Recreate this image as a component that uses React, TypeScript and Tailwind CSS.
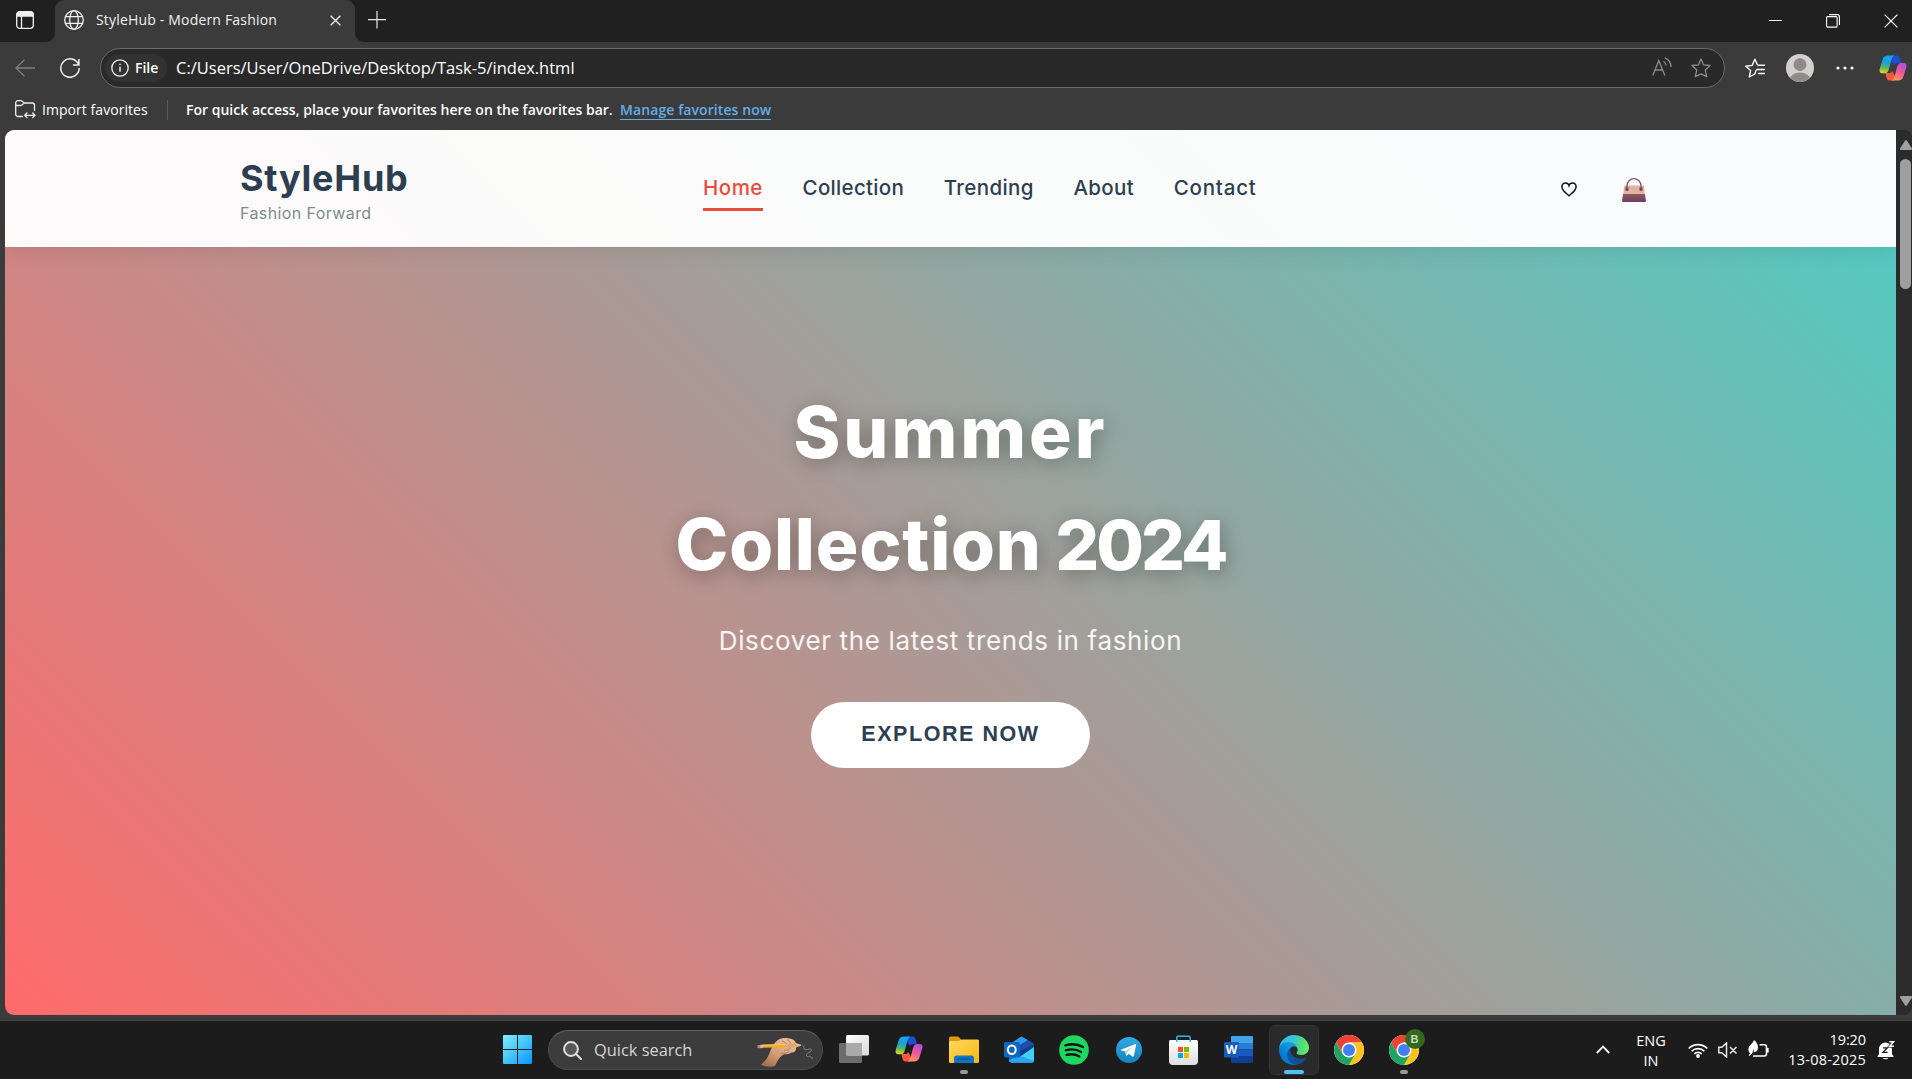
import React from "react";

const NAV = [
  { label: "Home", cls: "tracking-[0.5px] text-[#e74c3c] border-[#e74c3c]" },
  { label: "Collection", cls: "tracking-[0.3px] text-[#2c3e50] border-transparent" },
  { label: "Trending", cls: "tracking-[0.37px] text-[#2c3e50] border-transparent" },
  { label: "About", cls: "tracking-[0.35px] text-[#2c3e50] border-transparent" },
  { label: "Contact", cls: "tracking-[0.78px] text-[#2c3e50] border-transparent" },
];

function Copilot({ id, className }: { id: string; className: string }) {
  return (
    <svg viewBox="0 0 28 26" className={className} fill="none">
      <defs>
        <linearGradient id={id + "a"} x1="10" y1="1" x2="6" y2="19" gradientUnits="userSpaceOnUse">
          <stop stopColor="#12a5f4" /><stop offset=".4" stopColor="#1f9fd8" /><stop offset=".65" stopColor="#4cb96a" /><stop offset="1" stopColor="#f6d31f" />
        </linearGradient>
        <linearGradient id={id + "b"} x1="24" y1="7" x2="15" y2="26" gradientUnits="userSpaceOnUse">
          <stop stopColor="#a44ff0" /><stop offset=".5" stopColor="#f0559a" /><stop offset="1" stopColor="#ffa554" />
        </linearGradient>
      </defs>
      <path d="M13 .5h4.500c1.500 0 2.500.8 3 2.400l1.500 5.200h-4.200c-1.400 0-2.300.8-2.800 2.200L11 2.500z" fill="#1c4fd6" />
      <path d="M15 25.500h-4.600c-1.500 0-2.400-.9-2.800-2.400L6.300 18h4c1.500 0 2.500-.8 2.900-2.300l3.800 7.500z" fill="#f45a3c" />
      <path d="M9.200.5h6.500c-1.700.3-2.500 1.800-3.100 3.800L9.900 14.300c-.7 2.500-1.900 3.900-4.200 3.900H3.400c-2.400 0-3.400-1.600-2.700-4.200L3.500 4.700C4.400 1.800 6.200.5 9.200.5z" fill={`url(#${id}a)`} />
      <path d="M18.800 25.500h-6.500c1.700-.3 2.500-1.800 3.100-3.800l2.700-9.800c.7-2.500 1.900-3.900 4.200-3.900h2.300c2.400 0 3.400 1.600 2.700 4.200l-2.800 9.100c-.9 2.900-2.700 4.200-5.700 4.200z" fill={`url(#${id}b)`} />
    </svg>
  );
}

function Chrome({ className }: { className: string }) {
  return (
    <svg viewBox="0 0 48 48" className={className}>
      <circle cx="24" cy="24" r="24" fill="#fff" />
      <path d="M24 12h20.800A24 24 0 0 0 3.220 12L13.600 30 24 24z" fill="#ea4335" />
      <path d="M34.400 30 24 48A24 24 0 0 0 44.780 12H24v12z" fill="#fcc31e" />
      <path d="M13.600 30 3.220 12A24 24 0 0 0 24 48l10.400-18L24 26z" fill="#1ea362" />
      <circle cx="24" cy="24" r="12" fill="#fff" />
      <circle cx="24" cy="24" r="9.600" fill="#4080f0" />
    </svg>
  );
}

function TabStrip() {
  return (
    <div className="flex h-[42px] bg-[#202020] text-[#f0f0f0]">
      <div className="bg-[#3b3b3b]">
        <div className="flex h-[42px] w-[55px] items-start rounded-br-[9px] bg-[#202020] pt-[11px] pl-4">
          <svg viewBox="0 0 18 18" className="size-[18px]" fill="none" stroke="#f0f0f0" strokeWidth="1.300">
            <rect x=".7" y=".7" width="16.600" height="16.600" rx="3" />
            <path d="M1 3.500A2.500 2.500 0 0 1 3.500 1h11A2.500 2.500 0 0 1 17 3.500V5H1z" fill="#f0f0f0" />
            <path d="M5.500 5v12" />
          </svg>
        </div>
      </div>
      <div className="flex h-[42px] w-[300px] items-start rounded-t-[9px] bg-[#3b3b3b] pl-[9px]">
        <svg viewBox="0 0 20 20" className="mt-[10px] size-5" fill="none" stroke="#f0f0f0" strokeWidth="1.300">
          <circle cx="10" cy="10" r="9.300" />
          <ellipse cx="10" cy="10" rx="4.300" ry="9.300" />
          <path d="M1.500 6.700h17M1.500 13.300h17" />
        </svg>
        <span className="ml-3 w-[234px] text-[14px] leading-[40px] tracking-[0.18px] whitespace-nowrap">StyleHub - Modern Fashion</span>
        <svg viewBox="0 0 12 12" className="mt-[15px] size-[11px]" stroke="#f0f0f0" strokeWidth="1.500">
          <path d="M.7.7l10.600 10.600M11.300.7.7 11.300" />
        </svg>
      </div>
      <div className="flex-1 bg-[#3b3b3b]">
        <div className="flex h-[42px] items-start rounded-bl-[9px] bg-[#202020] pl-[13px]">
          <svg viewBox="0 0 18 18" className="mt-[11px] size-[18px]" stroke="#e8e8e8" strokeWidth="1.200">
            <path d="M9 0v17.500M0 8.600h18" />
          </svg>
          <div className="ml-auto flex items-start gap-[44px] pt-[14px] pr-[14px]">
            <span className="mt-[6px] h-px w-[13px] bg-white" />
            <svg viewBox="0 0 14 14" className="size-[14px]" fill="none" stroke="#fff" strokeWidth="1.100">
              <rect x=".6" y="2.600" width="10.500" height="10.500" rx="1" />
              <path d="M3 .6h8.400a2 2 0 0 1 2 2V11" />
            </svg>
            <svg viewBox="0 0 14 14" className="size-[14px]" stroke="#fff" strokeWidth="1.200">
              <path d="M.6.6l12.800 12.800M13.400.6.6 13.400" />
            </svg>
          </div>
        </div>
      </div>
    </div>
  );
}

function Toolbar() {
  return (
    <div className="flex h-[52px] items-center text-white">
      <svg viewBox="0 0 20 18" className="ml-[15px] h-[18px] w-5" fill="none" stroke="#808080" strokeWidth="1.300">
        <path d="M9.500.7.9 9l8.600 8.300M.9 9H20" />
      </svg>
      <svg viewBox="0 0 20 20" className="ml-[25px] size-5" fill="none" stroke="#f0f0f0" strokeWidth="1.500">
        <path d="M18.600 6.800A9.200 9.200 0 1 0 19.200 10M18.900 1v5.900h-5.900" />
      </svg>
      <div className="ml-5 flex h-10 w-[1625px] items-center rounded-full border border-[#6a6a6a] bg-[#292929] pl-1">
        <div className="flex h-7 w-[62px] items-center rounded-full bg-[#323232] pl-[6px]">
          <svg viewBox="0 0 18 18" className="size-[18px]" fill="none" stroke="#f0f0f0" strokeWidth="1.300">
            <circle cx="9" cy="9" r="8.200" />
            <path d="M9 7.700v5" strokeWidth="1.500" />
            <circle cx="9" cy="5.300" r=".5" fill="#f0f0f0" strokeWidth=".7" />
          </svg>
          <span className="ml-[6px] text-[14px] leading-7 font-semibold">File</span>
        </div>
        <span className="ml-[9px] text-[16.5px] leading-10 whitespace-nowrap">C:/Users/User/OneDrive/Desktop/Task-5/index.html</span>
        <svg viewBox="0 0 20 20" className="mb-[2px] ml-auto size-5" fill="none" stroke="#8c8c8c" strokeWidth="1.300">
          <path d="M.8 18.500 6.800 3.500l6 15M3 13h7.700M11.500 4.300c1.500.8 2.400 2.300 2.500 4.200M12.800.8c3.600 1.300 6 4.500 6.200 9.200" />
        </svg>
        <svg viewBox="0 0 20 20" className="mr-[13px] ml-[19px] size-5" fill="none" stroke="#8c8c8c" strokeWidth="1.300" strokeLinejoin="round">
          <path d="M10 .9l2.600 6 6.500.6-4.900 4.400 1.500 6.800L10 15.800 4.300 18.700l1.500-6.800L.9 7.500l6.500-.6z" />
        </svg>
      </div>
      <svg viewBox="0 0 20 20" className="ml-5 size-5" fill="none" stroke="#fff" strokeWidth="1.400" strokeLinejoin="round" strokeLinecap="round">
        <path d="M11 12.500 9.800 16 4.300 19l1.300-6.500L.8 8.300l6.300-.9L9.900 1.200l2.500 5.600M13.500 7.300H20M12 11.500h8M13.500 15.500H20" />
      </svg>
      <svg viewBox="0 0 28 28" className="ml-[21px] size-7">
        <defs><clipPath id="av"><circle cx="14" cy="14" r="14" /></clipPath></defs>
        <circle cx="14" cy="14" r="14" fill="#d2d0ce" />
        <g fill="#8f8b88" clipPath="url(#av)"><circle cx="14" cy="10.500" r="6.400" /><ellipse cx="14" cy="26.500" rx="10.500" ry="8" /></g>
      </svg>
      <svg viewBox="0 0 18 4" className="ml-[22px] h-1 w-[18px]" fill="#fff">
        <circle cx="2" cy="2" r="1.600" /><circle cx="9" cy="2" r="1.600" /><circle cx="16" cy="2" r="1.600" />
      </svg>
      <Copilot id="ct" className="ml-[25px] h-[26px] w-7" />
    </div>
  );
}

function FavoritesBar() {
  return (
    <div className="flex h-9 items-start whitespace-nowrap text-white">
      <svg viewBox="0 0 21 19" className="mt-[6px] ml-[15px] h-[19px] w-[21px]" fill="none" stroke="#f0f0f0" strokeWidth="1.300" strokeLinejoin="round" strokeLinecap="round">
        <path d="M7.500 16.500H3A2.300 2.300 0 0 1 .7 14.200V3A2.300 2.300 0 0 1 3 .7h3.500L9.200 3h8A2.300 2.300 0 0 1 19.500 5.300V10.500M.8 5.500h5.500L9.200 3M10 15.300h9.500M12 13l-2.300 2.300L12 17.600M17.700 13l2.300 2.300-2.300 2.300" />
      </svg>
      <span className="ml-[6px] w-[125px] text-[14px] leading-[31px] tracking-[0.05px]">Import favorites</span>
      <span className="mt-[6px] h-5 w-px bg-[#5a5a5a]" />
      <span className="ml-[18px] w-[434px] text-[14px] leading-[31px] font-semibold tracking-[0.01px]">For quick access, place your favorites here on the favorites bar.</span>
      <span className="mt-[6px] border-b border-[#62aeea] text-[14px] leading-[19px] font-semibold tracking-[0.09px] text-[#62aeea]">
        <span className="inline-block h-[17px]">Manage favorites now</span>
      </span>
    </div>
  );
}

function SiteHeader() {
  return (
    <header className="relative z-10 flex h-[117px] w-full shrink-0 items-start bg-[rgba(254,254,254,0.965)] pl-[235px] shadow-[0_2px_20px_rgba(0,0,0,0.1)]">
      <div className="w-[463px] pt-[26px]">
        <div className="text-[36px] leading-[44px] font-bold tracking-[0.75px] text-[#2c3e50]">StyleHub</div>
        <div className="text-[16px] leading-[27px] tracking-[0.4px] text-[#7f8c8d]">Fashion Forward</div>
      </div>
      <nav className="flex gap-[39.7px] pt-[42px]">
        {NAV.map((n) => (
          <a key={n.label} className={"border-b-3 pb-1 text-[20.5px] leading-8 font-medium " + n.cls}>{n.label}</a>
        ))}
      </nav>
      <svg viewBox="0 0 16 15" className="mt-[52px] mr-[45px] ml-auto h-[15px] w-4" fill="none" stroke="#111" strokeWidth="1.500">
        <path d="M8 13.700C5.500 11.500.9 8.600.9 4.700A3.600 3.600 0 0 1 4.500 1C6.300 1 7.600 2.200 8 3.500 8.400 2.200 9.700 1 11.500 1a3.600 3.600 0 0 1 3.600 3.700c0 3.900-4.600 6.800-7.100 9z" />
      </svg>
      <svg viewBox="0 0 24 24" className="mt-12 mr-[250px] size-6" fill="none">
        <defs>
          <linearGradient id="bagA" x1="0" y1="0" x2="0" y2="1"><stop stopColor="#deb09c" /><stop offset="1" stopColor="#e4b3a5" /></linearGradient>
          <linearGradient id="bagB" x1="0" y1="0" x2="0" y2="1"><stop stopColor="#8e5b62" /><stop offset="1" stopColor="#6d3b5e" /></linearGradient>
        </defs>
        <path d="M3 7.500h18a1 1 0 0 1 1 1l.7 8H1.300l.7-8a1 1 0 0 1 1-1z" fill="url(#bagA)" />
        <path d="M1 16h22l.9 6.500a1.300 1.300 0 0 1-1.300 1.500H1.400A1.300 1.300 0 0 1 .1 22.500z" fill="url(#bagB)" />
        <path d="M5 11V7.700a7 7 0 0 1 14 0V11" stroke="#8a5561" strokeWidth="1.300" />
        <path d="M3.500 9.500h3v3.300h-3zM17.500 9.500h3v3.300h-3z" fill="#7a4250" />
      </svg>
    </header>
  );
}

function Scrollbar() {
  return (
    <div className="flex w-4 flex-col items-center rounded-r-[8px] bg-[#2b2b2b] pt-[10px] pb-[9px]">
      <svg viewBox="0 0 12 10" className="ml-[3px] h-[10px] w-3" fill="#9f9f9f"><path d="M5 .8a1.200 1.200 0 0 1 2 0l4.800 7.400A1.200 1.200 0 0 1 11 10H1A1.200 1.200 0 0 1 .2 8.200z" /></svg>
      <div className="mt-[9px] ml-[3px] h-[130px] w-[11px] rounded-full bg-[#9f9f9f]" />
      <svg viewBox="0 0 12 10" className="mt-auto ml-[3px] h-[10px] w-3 rotate-180" fill="#9f9f9f"><path d="M5 .8a1.200 1.200 0 0 1 2 0l4.800 7.400A1.200 1.200 0 0 1 11 10H1A1.200 1.200 0 0 1 .2 8.200z" /></svg>
    </div>
  );
}

function Page() {
  return (
    <div className="flex h-[885px] pl-[5px]">
      <div className="flex w-[1891px] flex-col items-center overflow-hidden rounded-l-[9px] bg-[linear-gradient(45deg,#ff6b6b,#4ecdc4)] font-['Inter',sans-serif]">
        <SiteHeader />
        <h1 className="mt-[129px] text-center text-[71px] leading-[112px] font-extrabold whitespace-nowrap text-white [text-shadow:2px_4px_20px_rgba(0,0,0,0.3)]">
          <span className="tracking-[3px]">Summer</span><br />
          <span className="tracking-[0.8px]">Collection</span><span className="tracking-[-2px]"> </span><span className="text-[69px] tracking-[-3px]">2024</span>
        </h1>
        <p className="mt-[20px] text-[26px] leading-10 tracking-[0.64px] whitespace-nowrap text-white/90">Discover the latest trends in fashion</p>
        <button className="mt-[41px] h-[66px] w-[279px] shrink-0 rounded-full bg-white pb-[2px] font-['Liberation_Sans',Arial,sans-serif] text-[21.5px] font-bold tracking-[1.55px] text-[#2c3e50]">EXPLORE NOW</button>
      </div>
      <Scrollbar />
    </div>
  );
}

function Slot({ children, active, dot, bar }: { children: React.ReactNode; active?: boolean; dot?: boolean; bar?: boolean }) {
  return (
    <div className="flex w-[55px] justify-center pt-1">
      <div className={"relative flex h-[50px] w-[50px] items-center justify-center pb-[1px] " + (active ? "rounded-[6px] border border-[#343434] bg-[#2a2a2a]" : "")}>
        {children}
        {dot && <span className="absolute bottom-[1px] left-[21px] h-1 w-2 rounded-full bg-[#9a9a9a]" />}
        {bar && <span className="absolute bottom-0 left-[14px] h-1 w-5 rounded-full bg-[#4cc2ff]" />}
      </div>
    </div>
  );
}

function Taskbar() {
  return (
    <div className="flex h-[58px] bg-[#1c1c1c] pl-[490px] text-white">
      <Slot>
        <svg viewBox="0 0 29 29" className="size-[29px]">
          <defs><linearGradient id="win" x1="0" y1="0" x2="29" y2="29" gradientUnits="userSpaceOnUse"><stop stopColor="#80eeff" /><stop offset=".5" stopColor="#45c5fb" /><stop offset="1" stopColor="#0a94ff" /></linearGradient></defs>
          <path d="M1 0h13v14H0V1a1 1 0 0 1 1-1zM15 0h13a1 1 0 0 1 1 1v13H15zM0 15h14v14H1a1 1 0 0 1-1-1zM15 15h14v13a1 1 0 0 1-1 1H15z" fill="url(#win)" />
        </svg>
      </Slot>
      <div className="mt-[9px] mr-[3px] ml-[3px] flex h-10 w-[275px] items-center rounded-full border border-[#4c4c4c] border-t-[#606060] bg-[#3c3c3c] pl-[14px]">
        <svg viewBox="0 0 19 19" className="size-[19px]" fill="none" stroke="#e0e0e0" strokeWidth="2"><circle cx="8" cy="8" r="6.900" fill="#585858" /><path d="m13 13 5 5" strokeLinecap="round" /></svg>
        <span className="ml-3 pb-px text-[16.4px] leading-9 whitespace-nowrap text-[#d4d4d4]">Quick search</span>
        <svg viewBox="0 0 57 30" className="mt-[3px] mr-[8px] ml-auto h-[30px] w-[57px]" fill="none">
          <defs><linearGradient id="hand" x1="28" y1="2" x2="12" y2="29" gradientUnits="userSpaceOnUse"><stop stopColor="#e9bd98" /><stop offset=".6" stopColor="#cf9a73" /><stop offset="1" stopColor="#a9714d" /></linearGradient></defs>
          <path d="M4 27.500c4.500-3.500 7.500-8 9.500-14 1.600-4.500 4-8 7.500-10.500 3-2 8-2.500 11-1.500 4 .3 6 2 7 5 2 1.500 1.500 3.500 0 4.500.3 3-2 5-4.500 4.500-2 1.500-4.500 2-7.500 1.800-3.500 2-6.500 5.700-9 11.700-5 1.500-11 .5-14-1.500z" fill="url(#hand)" />
          <path d="M30 2.500c2.500 1.500 4 3 4.500 5.500M25 4c3 1 4.500 2.500 5 4M27 13c2 .5 5 0 7-2.500M24 16c3 1 6 .5 8-1.500" stroke="#a96c4a" strokeWidth=".8" />
          <path d="M5 7.800 40 6.500v3.500L5 10.800z" fill="#f5a623" /><path d="M5 7.800 40 6.500v1.200L5 8.900z" fill="#ffc95a" />
          <path d="M40 6.500 46 8.300 40 10z" fill="#e6c08f" />
          <path d="M44 7.700 46 8.300 44 9z" fill="#333" />
          <path d="M.5 8h3v3.200h-3z" fill="#e0727f" /><path d="M3.200 7.800h2.500v3.300H3.200z" fill="#b9c3d0" />
          <path d="M27 8.500c2-1.500 4-2 6-1.500l4.500-1c2 .5 2 2.500 0 3.500l-4.500 1c-2 1-4.500.5-6-2z" fill="#dba77f" />
          <path d="M47 8.500c-1 3.500 1 5 3.500 4s5-.5 3.500 1.500-5 2-4.500 4.500 3.500 0 4 1 .5 2 2.500 1.500" stroke="#8b8b8b" strokeWidth=".9" />
        </svg>
      </div>
      <Slot>
        <svg viewBox="0 0 30 28" className="mb-px h-7 w-[30px]">
          <defs><linearGradient id="tv" x1="0" y1="0" x2="1" y2="1"><stop stopColor="#fff" /><stop offset="1" stopColor="#d8d8d8" /></linearGradient></defs>
          <rect x="0" y="8" width="23" height="20" rx="1.500" fill="#6c6c6c" /><rect x="7" y="0" width="23" height="20.500" rx="1.500" fill="url(#tv)" /><path d="M7 8h16v12.500H8.500A1.500 1.500 0 0 1 7 19z" fill="#a9a9a9" />
        </svg>
      </Slot>
      <Slot><Copilot id="cb" className="mb-[2px] h-[26px] w-7" /></Slot>
      <Slot dot>
        <svg viewBox="0 0 30 27" className="h-[27px] w-[30px]">
          <defs><linearGradient id="fo" x1="0" y1="0" x2="1" y2="1"><stop stopColor="#ffd862" /><stop offset="1" stopColor="#fbb90e" /></linearGradient></defs>
          <path d="M0 2a1.500 1.500 0 0 1 1.500-1.500H8c1 0 1.500.3 2.200 1L12.500 4H28v6H0z" fill="#dd9a08" />
          <path d="M0 6.500a1.500 1.500 0 0 1 1.500-1.500H9c1 0 1.600-.3 2.300-.8.700-.6 1.200-.8 2.200-.8h15A1.500 1.500 0 0 1 30 5v20.500a1.500 1.500 0 0 1-1.500 1.500h-27A1.500 1.500 0 0 1 0 25.500z" fill="url(#fo)" />
          <path d="M5 27v-5a2.500 2.500 0 0 1 2.500-2.500h15A2.500 2.500 0 0 1 25 22v5z" fill="#0f75c9" /><path d="M8.500 23h13" stroke="#0a4a90" strokeWidth="1.200" />
        </svg>
      </Slot>
      <Slot>
        <svg viewBox="0 0 30 27" className="h-[27px] w-[30px]">
          <path d="M6 8 17.500.5 30 8v16a2.500 2.500 0 0 1-2.500 2.500h-20A2.500 2.500 0 0 1 5 24z" fill="#1572c8" />
          <path d="M6 8 17.500.5l6 3.600L10 13z" fill="#2f9be8" /><path d="M24 4 30 8 16 17l-6-4z" fill="#1d4fa8" />
          <path d="M30 8v6L14 24l-4-6z" fill="#0c3f94" />
          <path d="M30 11v13a2.500 2.500 0 0 1-2.500 2.500h-20L5 24l12-4z" fill="#3fd0f5" /><path d="m17 20 13 5a2.500 2.500 0 0 1-2.500 1.500h-20A2.500 2.500 0 0 1 5 24z" fill="#2aa5ee" />
          <rect y="6" width="16" height="15.500" rx="1.500" fill="#0f66bf" />
          <ellipse cx="7.800" cy="13.700" rx="3.900" ry="4.300" fill="none" stroke="#fff" strokeWidth="2" />
        </svg>
      </Slot>
      <Slot>
        <svg viewBox="0 0 30 30" className="size-[30px]" fill="none" strokeLinecap="round"><circle cx="15" cy="15" r="14.800" fill="#1ed760" /><path d="M6.300 10.400c6-1.800 12.800-1.200 17.800 1.700M6.800 15.300c5.300-1.500 10.800-.9 15.300 1.700M7.500 19.900c4.500-1.200 9-.7 12.900 1.500" stroke="#131313" strokeWidth="2.300" /></svg>
      </Slot>
      <Slot>
        <svg viewBox="0 0 26 26" className="size-[26px]"><defs><linearGradient id="tg" x1="0" y1="0" x2="0" y2="1"><stop stopColor="#2fabe6" /><stop offset="1" stopColor="#1583c0" /></linearGradient></defs><circle cx="13" cy="13" r="13" fill="url(#tg)" /><path d="M4.800 12.800 18.900 7.200c.7-.3 1.300.2 1.100 1.100l-2.200 10.600c-.2.800-.8 1-1.400.6l-3.600-2.700-1.800 1.700c-.5.400-.9.200-.9-.3l-1-3.700-4.200-1.300c-.5-.1-.5-.3-.1-.4z" fill="#fff" /><path d="m9.300 14.500 7.800-5-6.200 6-.3 2.600z" fill="#a9cfe6" /></svg>
      </Slot>
      <Slot>
        <svg viewBox="0 0 29 30" className="h-[30px] w-[29px]"><defs><linearGradient id="st" x1="0" y1="0" x2="0" y2="1"><stop stopColor="#fff" /><stop offset="1" stopColor="#dedede" /></linearGradient></defs><path d="M0 6.500A1.500 1.500 0 0 1 1.500 5h26A1.500 1.500 0 0 1 29 6.500V26a4 4 0 0 1-4 4H4a4 4 0 0 1-4-4z" fill="url(#st)" /><path d="M7.800 7V2.500A1.300 1.300 0 0 1 9 1.200h11a1.300 1.300 0 0 1 1.200 1.300V7" fill="none" stroke="#2bb3ee" strokeWidth="1.500" /><path d="M9 12h5v5H9z" fill="#f25022" /><path d="M15 12h5v5h-5z" fill="#7fba00" /><path d="M9 18h5v5H9z" fill="#00a4ef" /><path d="M15 18h5v5h-5z" fill="#ffb900" /></svg>
      </Slot>
      <Slot>
        <div className="relative mb-px h-[27px] w-[29px]">
          <svg viewBox="0 0 29 27" className="h-[27px] w-[29px]"><path d="M8 0h20a1 1 0 0 1 1 1v6H7V1a1 1 0 0 1 1-1z" fill="#41a5ee" /><path d="M7 7h22v6.500H7z" fill="#2b7cd3" /><path d="M7 13.500h22V20H7z" fill="#185abd" /><path d="M7 20h22v6a1 1 0 0 1-1 1H8a1 1 0 0 1-1-1z" fill="#103f91" /><rect y="6" width="15" height="15.500" rx="1.300" fill="#185abd" /></svg>
          <span className="absolute top-[6px] left-0 w-[15px] text-center font-['Open_Sans',sans-serif] text-[12px] leading-[15px] font-bold">W</span>
        </div>
      </Slot>
      <Slot active bar>
        <svg viewBox="0 0 256 256" className="size-[30px]">
          <defs>
            <linearGradient id="e1" x1="63" y1="177" x2="241" y2="177" gradientUnits="userSpaceOnUse"><stop stopColor="#0c59a4" /><stop offset="1" stopColor="#114a8b" /></linearGradient>
            <linearGradient id="e2" x1="157" y1="100" x2="46" y2="222" gradientUnits="userSpaceOnUse"><stop stopColor="#1b9de2" /><stop offset=".3" stopColor="#1595df" /><stop offset=".7" stopColor="#0680d7" /><stop offset="1" stopColor="#0078d4" /></linearGradient>
            <linearGradient id="e3" x1="10" y1="60" x2="245" y2="110" gradientUnits="userSpaceOnUse"><stop stopColor="#35b8ef" /><stop offset=".45" stopColor="#37c6d0" /><stop offset=".8" stopColor="#55dc70" /><stop offset="1" stopColor="#66eb6e" /></linearGradient>
          </defs>
          <path d="M231 190.500a94 94 0 0 1-10.500 4.700 102 102 0 0 1-35.900 6.500c-47.300 0-88.500-32.600-88.500-74.300a31.500 31.500 0 0 1 16.400-27.300c-42.800 1.800-53.800 46.400-53.800 72.500 0 73.900 68.100 81.400 82.800 81.400 7.900 0 19.800-2.300 27-4.600l1.300-.4a128.300 128.300 0 0 0 66.600-52.800 4 4 0 0 0-5.400-5.700z" fill="url(#e1)" />
          <path d="M105.700 241.400a79 79 0 0 1-22.700-21.300 80.700 80.700 0 0 1 29.500-120c3.200-1.500 8.500-4.100 15.600-4a32.400 32.400 0 0 1 25.700 13 31.900 31.900 0 0 1 6.300 18.700c0-.2 24.500-79.600-80-79.600-43.900 0-80 41.700-80 78.200a130.200 130.200 0 0 0 12.100 56 128 128 0 0 0 156.400 67 75.500 75.500 0 0 1-62.800-8z" fill="url(#e2)" />
          <path d="M152.300 148.900c-.8 1-3.300 2.500-3.300 5.700 0 2.600 1.700 5.100 4.700 7.200 14.400 10 41.500 8.700 41.500 8.700a59.600 59.600 0 0 0 30.300-8.300 61.400 61.400 0 0 0 30.500-52.900c.3-22.400-8-37.300-11.300-43.900C223.500 23.900 177.700 0 128 0A128 128 0 0 0 0 126.200c.5-36.500 36.800-66 80-66 3.500 0 23.500.3 42 10.100 16.300 8.600 24.900 19 30.800 29.200 6.200 10.700 7.300 24.200 7.300 29.500 0 5.400-2.700 13.400-7.800 19.900z" fill="url(#e3)" />
        </svg>
      </Slot>
      <Slot><Chrome className="size-[30px]" /></Slot>
      <Slot dot>
        <Chrome className="size-[30px]" />
        <span className="absolute top-[4px] left-[26px] size-5 rounded-full bg-[#33691e] text-center font-['Liberation_Sans',sans-serif] text-[11px] leading-5 font-bold text-[#c9dcc0]">B</span>
      </Slot>
      <div className="mr-[17px] ml-auto flex items-start text-[14.5px]">
        <svg viewBox="0 0 14 9" className="mt-6 h-[9px] w-[14px]" fill="none" stroke="#f4f4f4" strokeWidth="1.800"><path d="m.8 8 6.200-6.400L13.200 8" /></svg>
        <div className="mt-[9.5px] ml-6 w-[34px] text-center leading-5">ENG<br />IN</div>
        <svg viewBox="0 0 20 16" className="mt-[21px] ml-5 h-4 w-5" fill="none" stroke="#fff" strokeWidth="1.600"><path d="M.7 6.500a13.200 13.200 0 0 1 18.600 0M3.600 9.300a9 9 0 0 1 12.800 0M6.300 11.900a5.200 5.200 0 0 1 7.400 0" /><circle cx="10" cy="14" r="1.900" fill="#fff" stroke="none" /></svg>
        <svg viewBox="0 0 20 16" className="mt-[21px] ml-[10px] h-4 w-5" fill="none" stroke="#e8e8e8" strokeWidth="1.500"><path d="M.8 5.200h3L8.500 1v14l-4.700-4.200h-3zM12 5l6.500 6.500M18.500 5 12 11.500" /></svg>
        <svg viewBox="0 0 21 18" className="mt-[19px] ml-[10px] h-[18px] w-[21px]" fill="none">
          <path d="M11.500 4.700h4.800a2.200 2.200 0 0 1 2.200 2.200v6.900a2.200 2.200 0 0 1-2.200 2.200H5" stroke="#fff" strokeWidth="1.600" />
          <path d="M19 8h1.700v4.500H19z" fill="#fff" />
          <path d="M6 0c2.500 2 4 4.500 4 7.500 0 3-1.600 4.500-4.200 4.800L5.300 8.500 4.500 13l-3 3-.8-.7 1.500-2C.5 12 0 10 .6 7.800 1.200 5 5 3.500 6 0z" fill="#fff" />
        </svg>
        <div className="mt-[9px] ml-[16px] w-[81px] text-right leading-5"><span className="tracking-[-0.1px]">19:20</span><br /><span className="tracking-[0.2px]">13-08-2025</span></div>
        <svg viewBox="0 0 18 19" className="mt-[20px] ml-[11px] h-[19px] w-[18px]">
          <path d="M8.500 1.500A6.500 6.500 0 0 0 2 8v5L.5 15.500V16h16v-.5L15 13V8l-1-3-2-2.500zM5.500 17a3.300 2.200 0 0 0 6 0z" fill="#fff" />
          <path d="M6 6.800h4.300L6 11.300h4.600" stroke="#1c1c1c" strokeWidth="1.300" fill="none" />
          <path d="M12.300.8h4.200l-3.800 4.400h4.200" stroke="#1c1c1c" strokeWidth="2.600" fill="none" />
          <path d="M12.300.8h4.200l-3.800 4.400h4.200" stroke="#fff" strokeWidth="1.400" fill="none" />
        </svg>
      </div>
    </div>
  );
}

export default function App() {
  return (
    <div className="h-[1079px] w-[1912px] overflow-hidden bg-[#3b3b3b] font-['Open_Sans',sans-serif]">
      <TabStrip />
      <Toolbar />
      <FavoritesBar />
      <Page />
      <div className="h-[6px] border-b border-[#444]" />
      <Taskbar />
    </div>
  );
}
